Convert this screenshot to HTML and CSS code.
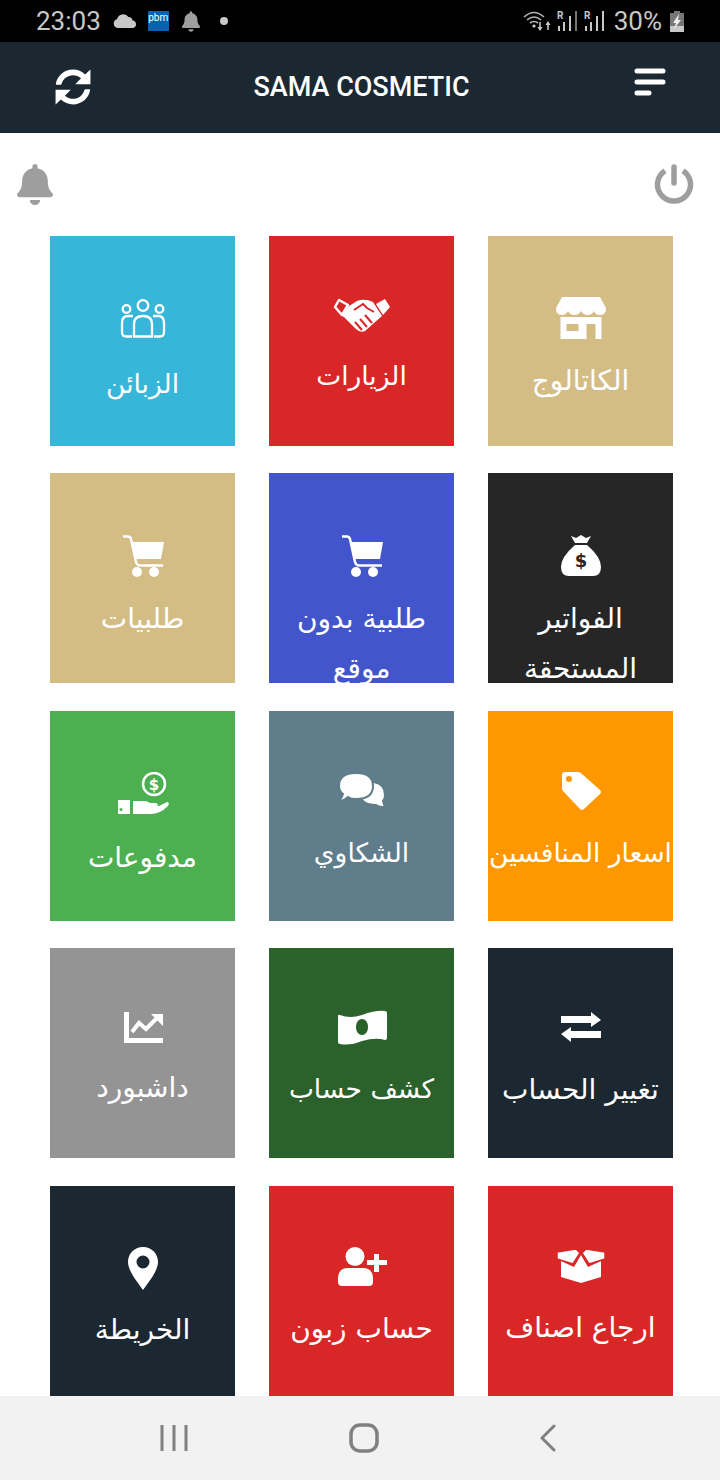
FILE: index.html
```html
<!DOCTYPE html>
<html lang="en">
<head>
    <meta charset="UTF-8">
    <title>Sama Cosmetic</title>
    <link rel="stylesheet" href="styles.css">
</head>
<body>
    <!-- Phone status bar -->
    <div class="status-bar">
        <div class="status-left">
            <span class="clock">23:03</span>
            <svg class="st-cloud" width="24" height="14" viewBox="0 0 24 14"><path fill="#c8c8c8" d="M5 14a4.500 4.500 0 0 1-1-8.800A6.500 6.500 0 0 1 15.500 3 4 4 0 0 1 19.500 6.500 3.800 3.800 0 0 1 20 14z"/></svg>
            <span class="st-app">pbm</span>
            <svg class="st-bell" width="18" height="21" viewBox="0 0 448 512"><use href="#bell-shape" fill="#c8c8c8"/></svg>
            <span class="st-dot"></span>
        </div>
        <div class="status-right">
            <svg class="st-wifi" width="28" height="22" viewBox="0 0 28 22"><g fill="none" stroke="#b5b5b5" stroke-width="1.600"><path d="M1 7Q11-2 21 7"/><path d="M4 10Q11 4 18 10"/><path d="M7 13Q11 10 15 13"/></g><circle cx="11" cy="16" r="1.600" fill="#ccc"/><path stroke="#ccc" stroke-width="1.500" d="M17 12v7M25 14v6"/><path fill="#ccc" d="M14.500 17h5L17 21zM22.500 15h5L25 11z"/></svg>
            <svg class="st-signal" width="20" height="21" viewBox="0 0 20 21"><text x="0" y="9" class="st-r">R</text><path stroke="#c8c8c8" stroke-width="2" d="M2 21v-5M7 21V12M13 21V6"/><path stroke="#777" stroke-width="2" d="M19 21V1"/></svg>
            <svg class="st-signal" width="20" height="21" viewBox="0 0 20 21"><text x="0" y="9" class="st-r">R</text><path stroke="#c8c8c8" stroke-width="2" d="M2 21v-5M7 21V12M13 21V6M19 21V1"/></svg>
            <span class="battery-text">30%</span>
            <svg width="14" height="21" viewBox="0 0 14 21"><path fill="#777" d="M4 0h6v2h4v19H0V2h4z"/><path fill="#c8c8c8" d="M0 15h14v6H0z"/><path fill="#eee" d="M9 3 3 12h3l-2 6 7-9H8z"/></svg>
        </div>
    </div>

    <header class="app-header">
        <svg class="hd-sync" width="36" height="36" viewBox="0 0 512 512"><path fill="#fff" d="M370.720 133.280C339.458 104.008 298.888 87.962 255.848 88c-77.458.068-144.328 53.178-162.791 126.850-1.344 5.363-6.122 9.150-11.651 9.150H24.103c-7.498 0-13.194-6.807-11.807-14.176C33.933 94.924 134.813 8 256 8c66.448 0 126.791 26.136 171.315 68.685L504 8V216H288zM8 296h216l-82.970 82.721c31.262 29.273 71.835 45.319 114.876 45.280 77.418-.07 144.315-53.144 162.787-126.849 1.344-5.363 6.122-9.150 11.651-9.150h57.304c7.498 0 13.194 6.807 11.807 14.176C478.067 417.076 377.187 504 256 504c-66.448 0-126.791-26.136-171.315-68.685L8 504z"/></svg>
        <h1 class="app-title">SAMA COSMETIC</h1>
        <svg class="hd-menu" width="32" height="28" viewBox="0 0 32 28"><path stroke="#fff" stroke-width="5" stroke-linecap="round" d="M3 3h26M3 14h26M3 25h12"/></svg>
    </header>

    <main class="content">
        <div class="tools">
            <svg width="36" height="41" viewBox="0 0 448 512"><path id="bell-shape" fill="#9e9e9e" d="M224 512c35.320 0 63.970-28.650 63.970-64H160.030c0 35.350 28.650 64 63.970 64zm215.390-149.710c-19.320-20.760-55.470-51.990-55.470-154.290 0-77.700-54.480-139.900-127.940-155.160V32c0-17.670-14.320-32-31.980-32s-31.980 14.330-31.980 32v20.840C118.560 68.100 64.080 130.300 64.080 208c0 102.300-36.150 133.530-55.470 154.290-6 6.450-8.660 14.160-8.610 21.710.11 16.400 12.980 32 32.100 32h383.800c19.120 0 32-15.600 32.100-32 .05-7.550-2.610-15.270-8.610-21.710z"/></svg>
            <svg width="40" height="41" viewBox="0 0 40 41"><g fill="none" stroke="#9e9e9e" stroke-width="5.500"><path d="M11 6.700a16.500 16.500 0 1 0 18 0"/><path stroke-linecap="round" d="M20 3v16"/></g></svg>
        </div>

        <div class="grid" dir="rtl">
            <a class="tile tan">
                <svg class="ico" width="60" height="42" viewBox="0 0 60 42"><path fill="#fff" fill-rule="evenodd" d="M11 0H49L55 11V13Q54 18 49 18 44 18 43 14 41 18 37 18 32 18 30 14 28 18 23 18 19 18 17 14 15 18 11 18 6 18 5 13V11z"/><path fill="#fff" fill-rule="evenodd" d="M9.500 20H50.500V42H9.500zM15.500 27V34H27.500V27zM35.500 27V42H44.500V27z"/></svg>
                <span class="label">الكاتالوج</span>
            </a>
            <a class="tile red">
                <svg class="ico push-2" width="60" height="35" viewBox="0 0 60 35"><g fill="none" stroke="#fff" stroke-width="2.500"><path stroke-linejoin="round" d="M3 10 7 3 16 8 10 18z"/></g><path fill="#fff" d="M58 10 53 2 44 7 51 18z"/><path fill="#fff" d="M17 9 25 4Q33 1 41 5L50 19 33 34Q28 36 24 32L12 20 10 19z"/><path fill="none" stroke="#d92727" stroke-width="2" d="M22 13 31 7 35 11 42 15M30 33 23 25M35 30 28 22M40 26 33 18"/></svg>
                <span class="label label-tight">الزيارات</span>
            </a>
            <a class="tile sky">
                <svg class="ico drop-2 push-4" width="60" height="39" viewBox="0 0 60 39"><g fill="none" stroke="#fff" stroke-width="2.300"><circle cx="30" cy="6.500" r="5.300"/><circle cx="13.500" cy="10" r="3.800"/><circle cx="46.500" cy="10" r="3.800"/><path d="M21 37.500V25Q21 17 30 17T39 25V37.500z"/><path d="M19 37.500H13Q9 37.500 9 33V24Q9 17 15 17H20M41 37.500H47Q51 37.500 51 33V24Q51 17 45 17H40"/></g></svg>
                <span class="label label-tight">الزبائن</span>
            </a>

            <a class="tile dark">
                <svg class="ico drop-1 push-1" width="60" height="41" viewBox="0 0 60 41"><path fill="#fff" d="M20 1 25 3 30 0 35 3 40 1 36 8H24zM24 10H36Q50 22 50 32 50 41 42 41H18Q10 41 10 32 10 22 24 10z"/><text x="30" y="32" class="dollar dollar-dark">$</text></svg>
                <span class="label">الفواتير المستحقة</span>
            </a>
            <a class="tile blue">
                <svg class="ico drop-1" width="60" height="42" viewBox="0 0 60 42"><use href="#cart"/></svg>
                <span class="label">طلبية بدون موقع</span>
            </a>
            <a class="tile tan">
                <svg class="ico drop-1" width="60" height="42" viewBox="0 0 60 42"><g id="cart"><path fill="none" stroke="#fff" stroke-width="2.500" d="M10 1.500H15Q17 1.500 18 4L23 27Q24 30.500 27 30.500H50"/><path fill="#fff" d="M19 7H51L48 24H23z"/><circle cx="24" cy="37" r="5" fill="#fff"/><circle cx="41" cy="37" r="5" fill="#fff"/></g></svg>
                <span class="label">طلبيات</span>
            </a>

            <a class="tile orange">
                <svg class="ico" width="60" height="39" viewBox="0 0 60 39"><path fill="#fff" fill-rule="evenodd" d="M11 3Q11 0 14 0H27Q29 0 31 2L49 18Q51 20 49 22L33 37Q31 39 29 37L12 19Q11 18 11 16zM18 4A3 3 0 1 0 18 10 3 3 0 1 0 18 4z"/></svg>
                <span class="label label-tight">اسعار المنافسين</span>
            </a>
            <a class="tile slate">
                <svg class="ico push-4" width="60" height="35" viewBox="0 0 60 35"><path fill="#fff" stroke="#607d8b" stroke-width="2" d="M28 21Q28 10 42 10 53 12 53 23 53 27 51 29 52 33 53 35 47 35 44 33 28 33 28 21z"/><path fill="#fff" stroke="#607d8b" stroke-width="2" d="M7 14Q7 1 24 1 41 1 41 14 41 27 24 27 19 27 16 25 12 29 7 29 10 26 11 22 7 19 7 14z"/></svg>
                <span class="label label-tight">الشكاوي</span>
            </a>
            <a class="tile green">
                <svg class="ico push-2" width="60" height="42" viewBox="0 0 60 42"><circle cx="41" cy="12" r="11" fill="none" stroke="#fff" stroke-width="2.500"/><text x="41" y="18" class="dollar dollar-small">$</text><path fill="#fff" fill-rule="evenodd" d="M5 28H17V42H5zM8 36A1.500 1.500 0 1 0 8 39 1.500 1.500 0 1 0 8 36z"/><path fill="#fff" d="M20 29H30Q35 29 37 31H43Q46 32 44 35H36L46 34 54 30Q57 30 55 34 47 42 38 42H20z"/></svg>
                <span class="label">مدفوعات</span>
            </a>

            <a class="tile navy">
                <svg class="ico drop-3 push-6" width="60" height="30" viewBox="0 0 60 30"><path fill="#fff" d="M10 4H40V0L50 8 40 15V11H10zM50 19H20V15L10 22 20 30V26H50z"/></svg>
                <span class="label">تغيير الحساب</span>
            </a>
            <a class="tile forest">
                <svg class="ico drop-1 push-2" width="60" height="35" viewBox="0 0 60 35"><path fill="#fff" fill-rule="evenodd" d="M6 6Q6 4 8 5 18 9 30 5 44 0 53 1 55 1 55 3V28Q55 30 53 30 44 27 30 31 18 36 8 34 6 34 6 32zM30 9C26 9 24 13 24 17 24 21 26 25 30 25 34 25 36 21 36 17 36 13 34 9 30 9z"/></svg>
                <span class="label label-tight">كشف حساب</span>
            </a>
            <a class="tile grey">
                <svg class="ico drop-3 push-3" width="60" height="31" viewBox="0 0 60 31"><path fill="#fff" d="M11 0H16V26H50V31H11z"/><path fill="none" stroke="#fff" stroke-width="4" d="M19 20 26 11 33 17 44 6"/><path fill="#fff" d="M38 2H50V14z"/></svg>
                <span class="label">داشبورد</span>
            </a>

            <a class="tile red">
                <svg class="ico drop-1 push-3" width="60" height="35" viewBox="0 0 60 35"><path fill="#fff" d="M10 13 23 19 30 7 37 19 50 13V29L30 35 10 29z"/><path fill="#fff" stroke="#d92727" stroke-width="1.500" d="M6 4 25 1 29 5 22 16 6 11zM54 4 35 1 31 5 38 16 54 11z"/></svg>
                <span class="label">ارجاع اصناف</span>
            </a>
            <a class="tile red">
                <svg class="ico push-1" width="60" height="39" viewBox="0 0 60 39"><circle cx="23" cy="9.500" r="9.500" fill="#fff"/><path fill="#fff" d="M6 35V30Q7 21 16 21H31Q40 21 41 30V35Q41 39 37 39H10Q6 39 6 35zM42 13V7H47V13H55V18H47V25H42V18H35V13z"/></svg>
                <span class="label">حساب زبون</span>
            </a>
            <a class="tile navy">
                <svg class="ico pull-2" width="60" height="43" viewBox="0 0 60 43"><path fill="#fff" fill-rule="evenodd" d="M30 0C21 0 15 7 15 15 15 24 25 36 30 43 35 36 45 24 45 15 45 7 39 0 30 0zM30 8.500A6.500 6.500 0 1 1 30 21.500 6.500 6.500 0 1 1 30 8.500z"/></svg>
                <span class="label">الخريطة</span>
            </a>
        </div>
    </main>

    <!-- Android navigation -->
    <nav class="nav-bar">
        <svg width="28" height="26" viewBox="0 0 28 26"><path stroke="#808080" stroke-width="3" d="M2 0V26M14 0V26M26 0V26"/></svg>
        <svg width="30" height="30" viewBox="0 0 30 30"><rect x="2" y="2" width="26" height="26" rx="9" fill="none" stroke="#808080" stroke-width="3.500"/></svg>
        <svg width="18" height="28" viewBox="0 0 18 28"><path fill="none" stroke="#808080" stroke-width="3" stroke-linecap="round" stroke-linejoin="round" d="M15 2 3 14 15 26"/></svg>
    </nav>
</body>
</html>
```

FILE: styles.css
```css
html, body {
    margin: 0;
    padding: 0;
}
body {
    width: 720px;
    height: 1480px;
    display: flex;
    flex-direction: column;
    overflow: hidden;
    background-color: #fff;
    font-family: 'Roboto', sans-serif;
}
.status-bar {
    height: 42px;
    flex: none;
    display: flex;
    justify-content: space-between;
    align-items: center;
    padding: 0 36px;
    background-color: #000;
    color: #c8c8c8;
}
.status-left, .status-right {
    display: flex;
    align-items: center;
}
.clock, .battery-text {
    font-size: 26px;
    line-height: 42px;
}
.st-cloud {
    margin-left: 12px;
}
.st-app {
    width: 21px;
    height: 20px;
    margin-left: 11px;
    background-color: #0a62ae;
    color: #fff;
    font-size: 10px;
    line-height: 14px;
    text-align: center;
}
.st-bell {
    margin-left: 13px;
}
.st-dot {
    width: 8px;
    height: 8px;
    margin-left: 20px;
    border-radius: 50%;
    background-color: #c8c8c8;
}
.st-wifi {
    margin-right: 6px;
}
.st-signal {
    margin: 0 7px 1px 0;
}
.st-r {
    fill: #c8c8c8;
    font-family: 'Roboto', sans-serif;
    font-size: 10px;
    font-weight: 700;
}
.battery-text {
    margin: 0 8px 0 3px;
}
.app-header {
    height: 91px;
    flex: none;
    display: flex;
    justify-content: space-between;
    align-items: center;
    padding: 0 54px 2px 55px;
    box-sizing: border-box;
    background-color: #1b2831;
}
.app-title {
    margin: 0 2px 0 0;
    color: #fff;
    font-size: 27px;
    font-weight: 500;
}
.hd-menu {
    margin-bottom: 10px;
}
.content {
    flex: 1;
    min-height: 0;
    overflow: hidden;
}
.tools {
    height: 103px;
    box-sizing: border-box;
    display: flex;
    justify-content: space-between;
    align-items: flex-start;
    padding: 31px 26px 0 17px;
}
.grid {
    display: grid;
    grid-template-columns: repeat(3, 185px);
    grid-auto-rows: 210px;
    column-gap: 34px;
    row-gap: 27.4px;
    padding: 0 47px 0 50px;
}
.tile {
    display: flex;
    flex-direction: column;
    align-items: center;
    padding-top: 61px;
    box-sizing: border-box;
    overflow: hidden;
    color: #fff;
    text-align: center;
}
.ico {
    flex: none;
    display: block;
    margin-bottom: 17px;
}
/* icons and labels do not sit at one height in every tile */
.drop-1 { margin-top: 1px; }
.drop-2 { margin-top: 2px; }
.drop-3 { margin-top: 3px; }
.push-1 { margin-bottom: 18px; }
.push-2 { margin-bottom: 19px; }
.push-3 { margin-bottom: 20px; }
.push-4 { margin-bottom: 21px; }
.push-6 { margin-bottom: 23px; }
.pull-2 { margin-bottom: 15px; }
.label {
    font-family: 'DejaVu Sans', sans-serif;
    font-size: 28px;
    line-height: 50px;
}
.label-tight {
    font-size: 26.5px;
}
.tan { background-color: #d4bc85; }
.red { background-color: #d92727; }
.sky { background-color: #38b6d9; }
.dark { background-color: #262626; }
.blue { background-color: #4355cb; }
.orange { background-color: #ff9800; }
.slate { background-color: #607d8b; }
.green { background-color: #4caf50; }
.navy { background-color: #1b2831; }
.forest { background-color: #2b622b; }
.grey { background-color: #949494; }
.dollar {
    font-family: 'DejaVu Sans', sans-serif;
    font-weight: 700;
    text-anchor: middle;
}
.dollar-dark {
    fill: #262626;
    font-size: 18px;
}
.dollar-small {
    fill: #fff;
    font-size: 15px;
}
.nav-bar {
    height: 84px;
    flex: none;
    display: flex;
    justify-content: space-between;
    align-items: center;
    padding: 0 163px 0 160px;
    background-color: #f2f2f2;
}
```
